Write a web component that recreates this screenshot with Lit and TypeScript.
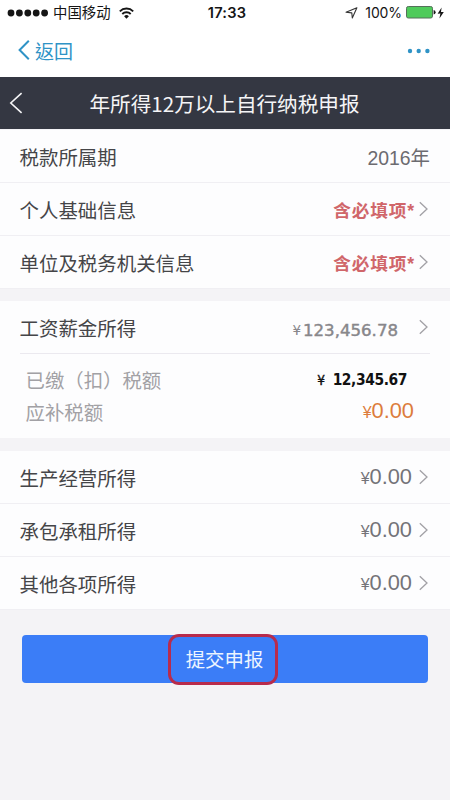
import { LitElement, html, css, svg, nothing } from "lit";
import { customElement, property } from "lit/decorators.js";

const cjk = css`"Liberation Sans", "Noto Sans CJK SC", sans-serif`;

@customElement("chevron-icon")
class ChevronIcon extends LitElement {
  static styles = css`
    :host { display: block; flex: none; width: 9px; height: 16px; color: #a2a1a6; }
    svg { display: block; }
  `;
  render() {
    return html`<svg width="9" height="16" viewBox="0 0 9 16" fill="none">
      <path d="M0.8 1.2 L8 8 L0.8 14.8" stroke="currentColor" stroke-width="1.3" />
    </svg>`;
  }
}

@customElement("status-bar")
class StatusBar extends LitElement {
  static styles = css`
    :host {
      display: grid; grid-template-columns: 1fr auto 1fr; align-items: center;
      height: 25px; padding: 0 5px 0 7px; background: #fff; color: #151515;
      font-family: ${cjk}; font-size: 15px; line-height: 24px;
    }
    .left, .right { display: flex; align-items: center; }
    .right { justify-content: flex-end; }
    .carrier { font-size: 14.4px; margin: 0 8px 0 4px; }
    .time { font-family: Inter, sans-serif; font-weight: 600; font-size: 14.6px; letter-spacing: 0.2px; padding-left: 2px; }
    .pct { font-family: Inter, sans-serif; font-size: 14px; letter-spacing: -0.1px; margin: 0 4px 0 7px; }
    svg { display: block; flex: none; }
  `;
  render() {
    return html`
      <div class="left">
        <svg width="42" height="8" viewBox="0 0 42 8">
          ${[4, 12.4, 20.8, 29.2, 37.6].map((x) => svg`<circle cx=${x} cy="4" r="3.4" fill="#151515" />`)}
        </svg>
        <span class="carrier">中国移动</span>
        <svg width="15" height="12" viewBox="0 0 15 12" fill="none" stroke="#151515" stroke-width="1.9">
          <path d="M0.8 4.3 A9.5 9.5 0 0 1 14.2 4.3" />
          <path d="M3.3 7 A6 6 0 0 1 11.7 7" />
          <path d="M7.5 11.7 L5.1 9.2 A3.4 3.4 0 0 1 9.9 9.2 Z" fill="#151515" stroke="none" />
        </svg>
      </div>
      <span class="time">17:33</span>
      <div class="right">
        <svg width="13" height="12" viewBox="0 0 13 12" fill="none">
          <path d="M11.9 0.7 L7.3 11 L6.8 5.9 L1 5.3 Z" stroke="#333" stroke-width="1.1" stroke-linejoin="round" />
        </svg>
        <span class="pct">100%</span>
        <svg width="30" height="13" viewBox="0 0 30 13">
          <rect x="0.5" y="0.5" width="26" height="11.5" rx="1.8" fill="#4fcb5b" stroke="#55705a" />
          <path d="M27.6 4 Q29.6 4.4 29.6 6.3 Q29.6 8.2 27.6 8.6 Z" fill="#151515" />
        </svg>
        <svg width="9" height="12" viewBox="0 0 9 12">
          <path d="M5.6 0.4 L1.6 6.7 L4.4 6.5 L3.4 11.6 L7.8 4.9 L5 5.1 Z" fill="#151515" />
        </svg>
      </div>`;
  }
}

@customElement("form-row")
class FormRow extends LitElement {
  @property() label = "";
  @property() value = "";
  @property() kind = "";
  static styles = css`
    :host {
      display: flex; align-items: center; height: 52px; padding: 0 22px 0 19.5px;
      border-bottom: 1px solid #f0eff3; background: #fdfdfe; font-family: ${cjk};
    }
    .label { flex: 1; font-size: 19.45px; color: #454548; }
    .year { font-size: 19.4px; color: #6c6b70; margin-right: -2px; }
    .required { font-size: 17.6px; font-weight: 700; letter-spacing: 0.9px; color: #d0666a; margin-right: 4px; }
    .money { font-size: 21.8px; color: #747378; margin-right: 7px; }
    .yen { font-size: 16px; margin-left: -1px; margin-right: 0; }
    .salary {
      font-family: "DejaVu Sans", sans-serif; font-size: 16.6px; color: #88878b;
      -webkit-text-stroke: 0.45px #88878b; margin: 6px 21px 0 0;
    }
    .salary .yen { font-size: 13.5px; margin-right: 2px; -webkit-text-stroke: 0; position: relative; top: -1px; }
  `;
  render() {
    const yen = this.kind === "money" || this.kind === "salary";
    return html`
      <span class="label">${this.label}</span>
      <span class=${this.kind}>${yen ? html`<span class="yen">¥</span>` : nothing}${this.value}</span>
      ${this.kind === "year" ? nothing : html`<chevron-icon></chevron-icon>`}`;
  }
}

@customElement("app-root")
class AppRoot extends LitElement {
  static styles = css`
    :host {
      display: flex; flex-direction: column; height: 800px; overflow: hidden;
      background: #f4f3f6; font-family: ${cjk};
    }
    .nav {
      display: flex; align-items: center; justify-content: space-between; height: 52px;
      padding: 0 20px 0 18px; background: #fff; color: #2f93c6;
    }
    .back {
      display: flex; align-items: center; gap: 5px; font-family: "Noto Sans CJK TC", sans-serif;
      font-size: 19px; line-height: 26px; margin-top: -2px;
    }
    .back span { padding-top: 2px; }
    svg { display: block; flex: none; }
    .title {
      display: flex; align-items: center; height: 52px; background: #343742; color: #f5f5f7;
      font-size: 20.6px; padding-left: 9px; margin-bottom: 1px;
      font-family: "Noto Sans CJK SC", sans-serif;
    }
    .title svg { margin-right: 66.5px; }
    .group { margin-bottom: 12px; }
    .salary-group { background: #fdfdfe; height: 137px; margin-bottom: 13px; }
    .salary-group form-row { border-bottom: none; }
    .details {
      margin: 0 20px; border-top: 1px solid #ebe9ef; padding: 9px 17px 0 5.5px;
      font-size: 19.4px; color: #a2a1a5;
    }
    .line { display: flex; align-items: center; justify-content: space-between; height: 32px; }
    .paid {
      font: 700 15.4px/32px "DejaVu Sans Condensed", "DejaVu Sans", sans-serif; font-stretch: condensed;
      letter-spacing: -0.4px; color: #111; margin: 2px 6px 0 0;
    }
    .paid .yen { font-weight: 400; -webkit-text-stroke: 0.4px #111; font-size: 13.5px; margin-right: 8px; }
    .due { font-size: 21.8px; color: #dc7c3c; margin-right: -1px; }
    .due .yen { font-size: 16px; }
    .submit {
      display: flex; align-items: center; justify-content: center; height: 48px;
      margin: 12.5px 22px 0; border-radius: 4px; background: #3b7df7;
    }
    .mark {
      box-sizing: border-box; width: 110px; height: 51px; border: 3px solid #b82b4c; border-radius: 11px;
      display: flex; align-items: center; justify-content: center; flex: none;
      color: #edf5ff; font-size: 19.4px; line-height: 26px; margin: 2px 5px 0 0; padding: 1px 0 0 4px;
    }
  `;
  render() {
    return html`
      <status-bar></status-bar>
      <div class="nav">
        <span class="back" lang="zh-Hant">
          <svg width="12" height="20" viewBox="0 0 12 20" fill="none">
            <path d="M10.8 0.8 L1.6 10 L10.8 19.2" stroke="currentColor" stroke-width="2" />
          </svg><span>返回</span>
        </span>
        <svg width="23" height="6" viewBox="0 0 23 6" fill="currentColor">
          <circle cx="3" cy="3" r="2.2" /><circle cx="11.7" cy="3" r="2.2" /><circle cx="20.4" cy="3" r="2.2" />
        </svg>
      </div>
      <div class="title">
        <svg width="14" height="22" viewBox="0 0 14 22" fill="none">
          <path d="M12.6 1.2 L1.8 11 L12.6 20.8" stroke="currentColor" stroke-width="1.6" />
        </svg>
        <span>年所得12万以上自行纳税申报</span>
      </div>
      <div class="group">
        <form-row label="税款所属期" value="2016年" kind="year"></form-row>
        <form-row label="个人基础信息" value="含必填项*" kind="required"></form-row>
        <form-row label="单位及税务机关信息" value="含必填项*" kind="required"></form-row>
      </div>
      <div class="group salary-group">
        <form-row label="工资薪金所得" value="123,456.78" kind="salary"></form-row>
        <div class="details">
          <div class="line"><span>已缴（扣）税额</span><span class="paid"><span class="yen">¥</span>12,345.67</span></div>
          <div class="line"><span>应补税额</span><span class="due"><span class="yen">¥</span>0.00</span></div>
        </div>
      </div>
      <div class="group">
        <form-row label="生产经营所得" value="0.00" kind="money"></form-row>
        <form-row label="承包承租所得" value="0.00" kind="money"></form-row>
        <form-row label="其他各项所得" value="0.00" kind="money"></form-row>
      </div>
      <div class="submit"><span class="mark">提交申报</span></div>`;
  }
}
